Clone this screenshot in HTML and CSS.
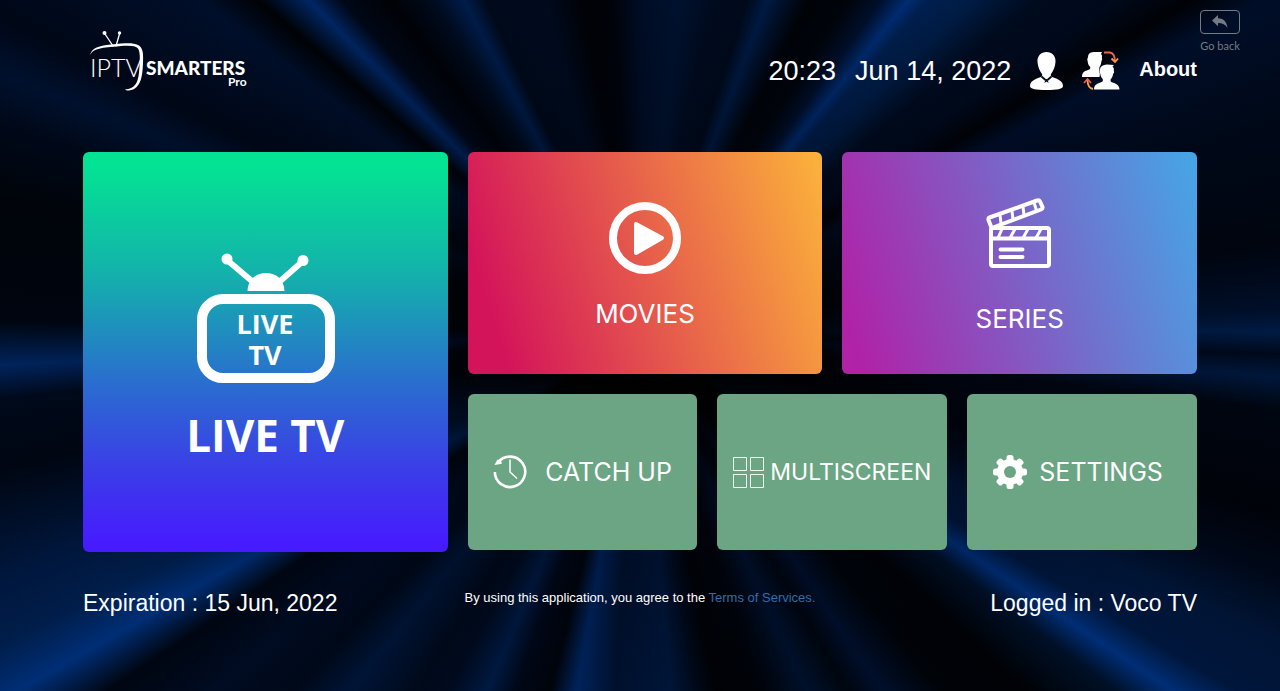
FILE: index.html
```html
<!DOCTYPE html>
<html lang="en">
<head>
<meta charset="utf-8">
<meta name="viewport" content="width=device-width, initial-scale=1">
<title>IPTV Smarters Pro</title>
<link rel="stylesheet" href="styles.css">
</head>
<body>
<button class="back" type="button">
  <span class="back-key">
    <svg width="16" height="14" viewBox="0 0 16 14" aria-hidden="true"><path d="M0 5.500 6 0v3.200c5 0 8.600 2.800 9.500 9.800C13.500 9.500 10.500 8 6 8v3.200z" fill="currentColor"/></svg>
  </span>
  <span>Go back</span>
</button>

<div class="page">
  <header class="top">
    <svg class="logo" width="168" height="64" viewBox="0 0 168 64" role="img" aria-label="IPTV Smarters Pro">
      <g fill="none" stroke="#fff" stroke-linecap="round">
        <path d="M22 6 30 18M36.500 6 33 18" stroke-width="1.300"/>
      </g>
      <circle cx="21.500" cy="5" r="2" fill="#fff"/><circle cx="36.500" cy="5" r="1.700" fill="#fff"/>
      <path d="M7 28C8 20 15 18 28 16.500 43 15 50 14.500 55 17c5 2.500 5.500 8 5 18-.5 12-1.500 26-14 27.500-2 .2-3-.2-4-1 10-.5 13-7 14-17 .8-9 1.800-20-1-24-2.500-3-9-3-19-2.300C20 19.500 9 20 7 28z" fill="#fff"/>
      <text class="logo-thin" x="7" y="49">IPTV</text>
      <text class="logo-bold" x="63" y="47">SMARTERS</text>
      <text class="logo-pro" x="145" y="58">Pro</text>
    </svg>
    <div class="tools">
      <time class="clock">20:23</time>
      <time class="clock">Jun 14, 2022</time>
      <button class="icon" type="button" aria-label="Account">
        <svg width="33" height="38" viewBox="0 0 33 38" aria-hidden="true"><path d="M16.500 0C22 0 26 4 25.500 10c-.4 5.500-2.500 9-4.500 12-.6 1 .2 2.600 1 3 6 2 11 4 11 9 0 3-6 4-16.500 4S0 37 0 34c0-5 5-7 11-9 .8-.4 1.600-2 1-3C10 19 7.900 15.500 7.500 10 7 4 11 0 16.500 0z" fill="#fff"/><path d="M11.500 24.500 15.500 28M21.500 24.500 17.500 28" stroke="#000a1e" stroke-width="1.800"/><path d="m15.500 27-1 4 2-1.500 2 1.500-1-4z" fill="#000a1e"/></svg>
      </button>
      <button class="icon" type="button" aria-label="Switch user">
        <svg width="38" height="40" viewBox="0 0 38 40" aria-hidden="true">
          <path d="M0 26c0-5 3-6 6-7 2-.6 2.500-1.300 2.200-3C6 14 6 12 5.500 9.500 5 8 5.500 7 6 6.500 6 2 9 1 13 1h7l-1 2c1.500 1.500 1 3 .8 4 .7.500.2 2-.3 3-.5 3-.8 4.500-2 6-.4 2 .2 3 1 3.500l-1 6.500z" fill="#fff"/>
          <path d="M12 38.500c0-4 2-5.500 7-7.200 2-.8 2.200-1.800 1.700-3.300-1.500-1.500-2.200-3.500-2.500-5.500-.9-.5-1-2-.2-3.500C18 15 21 14 25 13.500l7 .5-1.500 1.500c1.500 1 1.500 3 1.300 4.500.7 1 .3 2-.6 2.700-.5 2.800-1.200 4.300-2.500 5.500-.5 1.500-.2 2.500 1.800 3.300 5 1.500 7 3.500 7 7z" fill="#fff" stroke="#000a1e" stroke-width="1" paint-order="stroke"/>
          <path d="M22 1.500h6q5 1 5 9" fill="none" stroke="#ee6352" stroke-width="1.800"/>
          <path d="m29.500 7.500 3.500 3.500 3-3.500" fill="none" stroke="#ff9d3c" stroke-width="1.800"/>
          <path d="M11 38q-5.500-1-5.500-9.500" fill="none" stroke="#ff9d3c" stroke-width="1.800"/>
          <path d="M2 32 5.500 28 9 32" fill="none" stroke="#ee5a52" stroke-width="1.800"/>
        </svg>
      </button>
      <a class="about" href="#">About</a>
    </div>
  </header>

  <main class="board">
    <button class="card live" type="button">
      <svg width="140" height="132" viewBox="0 0 140 132" aria-hidden="true">
        <g stroke="#fff" stroke-width="6" stroke-linecap="round"><path d="M32 8 58 30M108 9 83 31"/></g>
        <circle cx="32" cy="7" r="5.500" fill="#fff"/><circle cx="108" cy="8.500" r="5.500" fill="#fff"/>
        <path d="M52.500 39C53 27 61 21 71 21s18 6 18.500 18z" fill="#fff"/>
        <rect x="7" y="47" width="128" height="79" rx="21" fill="none" stroke="#fff" stroke-width="10"/>
        <text class="screen-text" x="70" y="82">LIVE</text>
        <text class="screen-text" x="70" y="113">TV</text>
      </svg>
      <span class="live-label">LIVE TV</span>
    </button>

    <div class="side">
      <div class="row media">
        <button class="card movies" type="button">
          <svg width="80" height="80" viewBox="0 0 80 80" aria-hidden="true"><circle cx="40" cy="40" r="32" fill="none" stroke="#fff" stroke-width="8"/><path d="M31 26v29l26-15z" fill="#fff" stroke="#fff" stroke-width="4" stroke-linejoin="round"/></svg>
          <span class="label">MOVIES</span>
        </button>
        <button class="card series" type="button">
          <svg width="80" height="80" viewBox="0 0 80 80" aria-hidden="true">
            <g fill="none" stroke="#fff" stroke-width="4" stroke-linejoin="round" stroke-linecap="round">
              <rect x="11" y="30" width="58" height="38" rx="2"/>
              <path d="M11 40.500h58"/>
              <path d="M9.500 19.500 57 2.500q2-.8 3 1l2.500 5.500q.5 1.500-1.500 2.500L13 29.500q-1.500.5-2-1L8.500 22q-.5-2 1-2.500z"/>
              <path d="m20 17 1 8.500M32 13l1 8.500M43 9l1 8M54 4.500l2.500 8" stroke-width="3"/>
              <path d="m22 31-4 9M35 31l-5 9M48 31l-5 9M61 31l-5 9" stroke-width="3"/>
              <path d="M20.500 51.500h22M20.500 59h22"/>
            </g>
          </svg>
          <span class="label">SERIES</span>
        </button>
      </div>
      <div class="row extras">
        <button class="card tile catchup" type="button">
          <svg width="34" height="34" viewBox="0 0 34 34" aria-hidden="true"><path d="M5 7.500A15.200 15.200 0 1 1 1.800 17" fill="none" stroke="#fff" stroke-width="2.600"/><path d="m1.500 10 7.500-1.300-1-2.900-3.500-1.300z" fill="#fff"/><path d="M17 4.500V17l7 6.500" fill="none" stroke="#fff" stroke-width="1.500"/></svg>
          <span class="label">CATCH UP</span>
        </button>
        <button class="card tile multi" type="button">
          <svg width="31" height="31" viewBox="0 0 31 31" aria-hidden="true"><path d="M.5.500h13v13H.5zM17.500.500h13v13h-13zM.5 17.500h13v13H.5zM17.500 17.500h13v13h-13z" fill="none" stroke="#f0fff0"/></svg>
          <span class="label">MULTISCREEN</span>
        </button>
        <button class="card tile settings" type="button">
          <svg width="34" height="34" viewBox="0 0 34 34" aria-hidden="true">
            <g fill="#fff"><rect x="13.500" width="7" height="34" rx="2.500"/><rect x="13.500" width="7" height="34" rx="2.500" transform="rotate(45 17 17)"/><rect x="13.500" width="7" height="34" rx="2.500" transform="rotate(90 17 17)"/><rect x="13.500" width="7" height="34" rx="2.500" transform="rotate(135 17 17)"/><circle cx="17" cy="17" r="13"/></g>
            <circle cx="17" cy="17" r="6" fill="#6ca583"/>
          </svg>
          <span class="label">SETTINGS</span>
        </button>
      </div>
    </div>
  </main>

  <footer class="bottom">
    <span>Expiration : 15 Jun, 2022</span>
    <p class="terms">By using this application, you agree to the <a href="#">Terms of Services.</a></p>
    <span class="user">Logged in : Voco TV</span>
  </footer>
</div>
</body>
</html>
```
FILE: styles.css
```css
* {
  box-sizing: border-box;
}

body {
  margin: 0;
  min-height: 100vh;
  color: #fff;
  font-family: "Liberation Sans", Arial, sans-serif;
  background:
    radial-gradient(ellipse at 50% 49%, #000 10%, rgba(0, 4, 14, 0.5) 38%, rgba(0, 4, 14, 0.25) 75%),
    conic-gradient(from 0deg at 50% 48%,
      #00102e 0deg, #00173c 7deg, #000e26 12deg, #000c20 18deg,
      #002358 21deg, #00112c 24deg, #000205 27deg, #000409 32deg, #001335 36deg,
      #003a94 39deg, #002864 41deg, #002456 45deg, #000d24 50deg, #000b20 55deg,
      #000103 59deg, #001131 62deg, #000b1e 70deg, #00050f 82deg,
      #001333 88deg, #002459 90deg, #000b20 92deg, #001f4d 94deg, #000611 97deg,
      #000208 106deg, #000a1c 111deg, #001a42 116deg, #001c4a 121deg,
      #003c98 124deg, #00142f 127deg, #000102 133deg, #000307 140deg,
      #001335 146deg, #00060f 150deg, #001536 155deg, #000308 161deg, #000102 168deg,
      #000a1c 171deg, #001c48 175deg, #001539 184deg, #002f7a 190deg,
      #00040a 194deg, #00081a 199deg, #002155 203deg, #000d24 208deg, #000b1e 212deg,
      #001a44 219deg, #000a1c 224deg, #000e28 230deg, #000713 236deg,
      #003c98 240deg, #00265e 244deg, #001d4c 249deg, #000713 258deg,
      #000c20 264deg, #00307a 267deg, #00060f 271deg, #000409 282deg,
      #000a1c 288deg, #001538 292deg, #00081a 296deg, #000e28 302deg, #001233 307deg,
      #000102 311deg, #003280 315deg, #00091a 318deg, #000103 323deg, #000e24 328deg,
      #002662 332deg, #000c20 335deg, #000d24 344deg, #000103 350deg, #000207 355deg,
      #00102e 360deg);
}

button {
  padding: 0;
  border: 0;
  background: none;
  color: inherit;
  font: inherit;
  cursor: pointer;
}

svg {
  display: block;
  flex: none;
}

a {
  color: inherit;
  text-decoration: none;
}

.back {
  position: absolute;
  top: 10px;
  right: 40px;
  display: flex;
  flex-direction: column;
  align-items: center;
  gap: 4px;
  color: #757b85;
  font: 11px/16px Lato, sans-serif;
}

.back-key {
  display: flex;
  align-items: center;
  justify-content: center;
  width: 40px;
  height: 24px;
  border: 1px solid currentColor;
  border-radius: 4px;
}

.page {
  padding: 28px 83px 0;
}

.top {
  display: flex;
  justify-content: space-between;
  height: 124px;
}

.tools {
  display: flex;
  align-items: center;
  align-self: flex-start;
  gap: 19px;
  padding-top: 23px;
}

.clock {
  font-size: 27px;
  line-height: 40px;
}

.about {
  font-size: 20px;
  font-weight: bold;
  line-height: 24px;
  padding-bottom: 4px;
}

.logo text {
  fill: #fff;
  font-family: Lato, sans-serif;
}

.logo .logo-thin {
  font-size: 25px;
  font-weight: 300;
}

.logo .logo-bold {
  font-size: 19px;
  font-weight: 900;
}

.logo .logo-pro {
  font-size: 12px;
  font-weight: 700;
}

.board {
  display: grid;
  grid-template-columns: 1fr 2fr;
  gap: 20px;
}

.side,
.row {
  display: grid;
  gap: 20px;
  align-content: start;
}

.media {
  grid-template-columns: repeat(2, 1fr);
}

.extras {
  grid-template-columns: repeat(3, 1fr);
}

.card {
  display: flex;
  flex-direction: column;
  align-items: center;
  border-radius: 6px;
}

.live {
  min-height: 400px;
  padding-top: 100px;
  gap: 25px;
  background: linear-gradient(#04e294 4%, #14b0ac 31%, #2a6dcf 58%, #3b3ce9 80%, #471bff 98%);
}

.screen-text {
  fill: #fff;
  font: 700 27px "Open Sans", sans-serif;
  text-anchor: middle;
}

.live-label {
  font: 700 44px/52px "Open Sans", sans-serif;
}

.label {
  font: 25px/30px Inter, sans-serif;
}

.movies,
.series {
  min-height: 222px;
  padding-top: 46px;
}

.media .label {
  font-size: 26px;
}

.movies {
  gap: 21px;
  background: linear-gradient(72deg, #d4145a 10%, #fbb03b 98%);
}

.series {
  gap: 26px;
  background: linear-gradient(72deg, #b022a8 5%, #47a4e5 98%);
}

.tile {
  flex-direction: row;
  justify-content: center;
  min-height: 156px;
  background: #6ca583;
}

.catchup {
  gap: 18px;
}

.multi {
  gap: 6px;
}

.multi .label {
  font-size: 23px;
}

.settings {
  gap: 12px;
  padding-right: 8px;
}

.bottom {
  display: grid;
  grid-template-columns: 1fr auto 1fr;
  padding-top: 37px;
  font-size: 23px;
  line-height: 28px;
}

.terms {
  margin: 0;
  font-size: 13px;
  line-height: 18px;
}

.terms a {
  color: #2f6ea8;
}

.user {
  text-align: right;
}
```
